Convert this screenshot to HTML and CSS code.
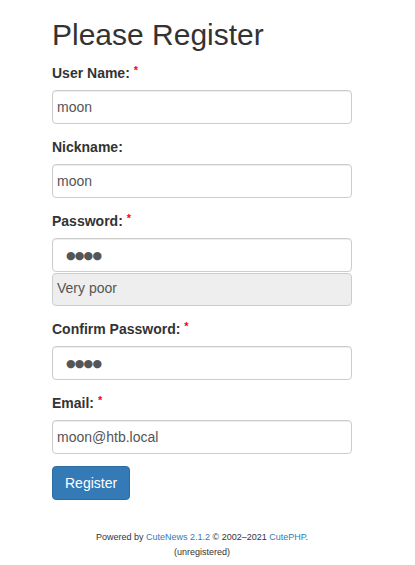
FILE: index.html
```html
<!DOCTYPE html>
<html>
<head>
<meta charset="utf-8">
<link rel="stylesheet" href="styles.css">
</head>
<body>
<div class="page">
  <div class="container">
    <h2 class="title">Please Register</h2>
    <form class="form">
      <div class="group">
        <label class="label">User Name: <span class="req">*</span></label>
        <input class="field" type="text" value="moon">
      </div>
      <div class="group">
        <label class="label">Nickname:</label>
        <input class="field" type="text" value="moon">
      </div>
      <div class="group">
        <label class="label">Password: <span class="req">*</span></label>
        <input class="field dots" type="text" value="●●●●">
        <div class="meter">Very poor</div>
      </div>
      <div class="group">
        <label class="label">Confirm Password: <span class="req">*</span></label>
        <input class="field dots" type="text" value="●●●●">
      </div>
      <div class="group">
        <label class="label">Email: <span class="req">*</span></label>
        <input class="field" type="text" value="moon@htb.local">
      </div>
      <button class="btn" type="button">Register</button>
    </form>
  </div>
  <div class="footer">
    <div>Powered by <a class="link">CuteNews 2.1.2</a> © 2002–2021 <a class="link">CutePHP</a>.</div>
    <div>(unregistered)</div>
  </div>
</div>
</body>
</html>
```
FILE: styles.css
```css
html, body {
  margin: 0;
  padding: 0;
  background: #fff;
}
body {
  font-family: "Liberation Sans", Arial, sans-serif;
  font-size: 14px;
  color: #333;
}
.page {
  width: 404px;
}
.container {
  width: 300px;
  margin: 0 auto;
}
.title {
  margin: 18px 0 11px;
  font-size: 30px;
  font-weight: 400;
  line-height: 33px;
  color: #333;
}
.form {
  margin: 0;
}
.group {
  margin-bottom: 12px;
}
.label {
  display: block;
  font-weight: 700;
  line-height: 20px;
  height: 20px;
  padding-top: 1px;
  margin-bottom: 7px;
}
.req {
  color: #f00;
  font-size: 11px;
  line-height: 0;
  position: relative;
  top: -4px;
}
.field {
  display: block;
  box-sizing: border-box;
  width: 300px;
  height: 34px;
  margin: 0;
  padding: 0 4px;
  border: 1px solid #ccc;
  border-radius: 4px;
  box-shadow: inset 0 1px 1px rgba(0,0,0,.075);
  font-family: "Liberation Sans", Arial, sans-serif;
  font-size: 14px;
  color: #555;
  background: #fff;
  outline: none;
}
.dots {
  padding-left: 13px;
  font-family: "DejaVu Sans", sans-serif;
  font-size: 11px;
  letter-spacing: -0.8px;
}
.meter {
  box-sizing: border-box;
  height: 33px;
  margin-top: 1px;
  padding: 0 4px;
  border: 1px solid #ccc;
  border-radius: 4px;
  background: #eee;
  color: #555;
  line-height: 28px;
  margin-bottom: 1px;
}
.btn {
  display: block;
  box-sizing: border-box;
  margin-top: 3px;
  width: 78px;
  height: 34px;
  padding: 0 12px;
  border: 1px solid #2e6da4;
  border-radius: 4px;
  background: #337ab7;
  color: #fff;
  font-family: "Liberation Sans", Arial, sans-serif;
  font-size: 14px;
}
.footer {
  margin-top: 30px;
  text-align: center;
  font-size: 9px;
  line-height: 15px;
  color: #333;
}
.link {
  color: #337ab7;
  text-decoration: none;
}
```
